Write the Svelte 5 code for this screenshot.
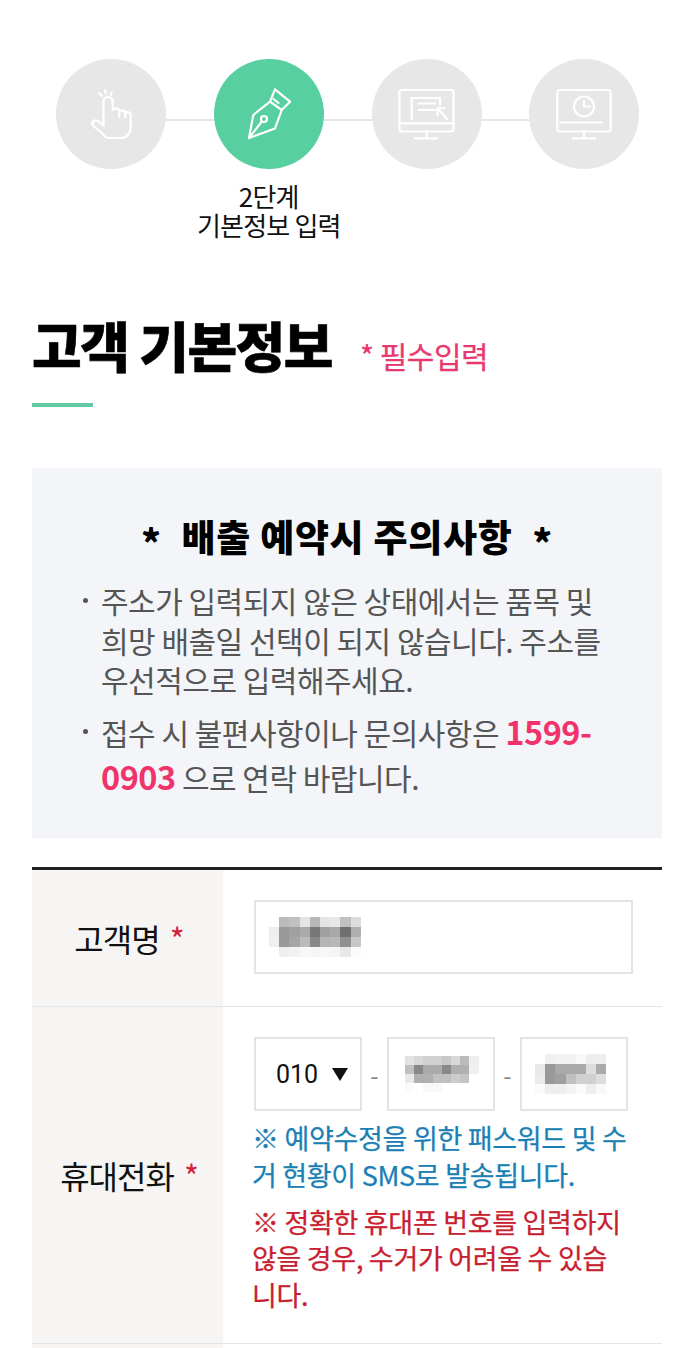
<script>
  const mosaics = {
    name: { w: 10.2, h: 10, cols: 9, cells: [
      '#fff','#bbb','#c0c0c0','#e4e4e4','#b8b8b8','#e4e4e4','#e8e8e8','#c0c0c0','#dcdcdc',
      '#eee','#999','#a0a0a0','#aaa','#777','#a0a0a0','#a8a8a8','#6f6f6f','#b0b0b0',
      '#f0f0f0','#999','#a5a5a5','#bbb','#888','#b5b5b5','#b8b8b8','#909090','#c8c8c8',
      '#fff','#f0f0f0','#f2f2f2','#f8f8f8','#f5f5f5','#f8f8f8','#f5f5f5','#e8e8e8','#fbfbfb'
    ] },
    mid: { w: 9.2, h: 9, cols: 8, cells: [
      '#e2e2e2','#d8d8d8','#d0d0d0','#d0d0d0','#c8c8c8','#d8d8d8','#bbb','#eee',
      '#c0c0c0','#888','#aaa','#aaa','#888','#b0b0b0','#b0b0b0','#f0f0f0',
      '#e8e8e8','#b0b0b0','#b0b0b0','#c0c0c0','#c0c0c0','#ccc','#c4c4c4','#fff',
      '#fbfbfb','#fff','#f8f8f8','#f8f8f8','#fff','#fff','#fff','#fff'
    ] },
    last: { w: 10.2, h: 10, cols: 7, cells: [
      '#fff','#f0f0f0','#f2f2f2','#f2f2f2','#f8f8f8','#eee','#eee',
      '#e8e8e8','#999','#aaa','#aaa','#aaa','#ddd','#aaa',
      '#ebebeb','#999','#a0a0a0','#c0c0c0','#d0d0d0','#d0d0d0','#ddd',
      '#fafafa','#eee','#eee','#f4f4f4','#fafafa','#eee','#f8f8f8'
    ] }
  };
</script>

{#snippet mosaic(m)}
  <div class="mosaic" style="grid-template-columns: repeat({m.cols}, {m.w}px); grid-auto-rows: {m.h}px">
    {#each m.cells as c}<i style="background: {c}"></i>{/each}
  </div>
{/snippet}

<div class="page">
  <div class="steps">
    <div class="step">
      <div class="circle">
        <svg viewBox="0 0 110 110">
          <path d="M47.5 66 V42.5 a4.6 4.6 0 0 1 9.2 0 V51 c2-2 6.5-2 6.5 1.5 c2-2 6-1.5 6 1.5 c2-1.5 5.5-1 5.5 2 V68 c0 6-4 11-9 11 H53 c-3 0-5-2-7-5 L37 66.500 c-2.500-3 1.500-6.500 5-4.500 l5.500 4.500" />
          <path d="M63.200 52.500 V58 M69.200 54 V58 M43.300 34.300 L45.700 37 M49 31 L49.700 34.300 M55.700 33.300 L54.700 36" />
        </svg>
      </div>
    </div>
    <div class="step active">
      <div class="circle">
        <svg viewBox="0 0 110 110">
          <path d="M35 79 L39.300 56 L56 42.700 L61 30.300 L76 42.700 L67.700 51 L61 69.500 Z" />
          <path d="M56 42.700 L67.700 51 M35 79 L47.800 62.500 M59.500 40 L64.500 44" />
          <circle cx="50" cy="60" r="3" />
        </svg>
      </div>
      <div class="step-label">2단계<br />기본정보 입력</div>
    </div>
    <div class="step">
      <div class="circle">
        <svg viewBox="0 0 110 110">
          <rect x="27.500" y="31" width="54" height="41.500" rx="2.500" />
          <path d="M27.500 64.300 H81.500 M54.700 72.500 V79.300 M43 79.300 H65.300" />
          <path d="M39.700 60 V39 H68 V46 M46.500 44.500 H63 M46.500 51 H63" />
          <path d="M65.500 49 L65.500 56 M65.500 49 L72.500 49 M66 49.500 L75 60" />
        </svg>
      </div>
    </div>
    <div class="step">
      <div class="circle">
        <svg viewBox="0 0 110 110">
          <rect x="28.300" y="31" width="53.400" height="41.500" rx="2.500" />
          <path d="M31 63.500 H73 M55 72.500 V79.300 M44 79.300 H66" />
          <circle cx="55" cy="47.500" r="10" />
          <path d="M55 41.500 V47.500 H61" />
        </svg>
      </div>
    </div>
  </div>

  <div class="title">
    <h2>고객 기본정보</h2>
    <span>* 필수입력</span>
  </div>
  <div class="title-bar"></div>

  <div class="notice">
    <h3><b>*</b>배출 예약시 주의사항<b>*</b></h3>
    <ul>
      <li>주소가 입력되지 않은 상태에서는 품목 및 희망 배출일 선택이 되지 않습니다. 주소를 우선적으로 입력해주세요.</li>
      <li class="tel">접수 시 불편사항이나 문의사항은 <strong>1599-0903</strong> 으로 연락 바랍니다.</li>
    </ul>
  </div>

  <div class="form">
    <div class="row row-name">
      <div class="label">고객명 <em>*</em></div>
      <div class="field">
        <div class="box box-name">{@render mosaic(mosaics.name)}</div>
      </div>
    </div>
    <div class="row row-phone">
      <div class="label">휴대전화 <em>*</em></div>
      <div class="field">
        <div class="phone">
          <div class="box select">010<span class="arrow"></span></div>
          <span class="dash">-</span>
          <div class="box part">{@render mosaic(mosaics.mid)}</div>
          <span class="dash">-</span>
          <div class="box part last">{@render mosaic(mosaics.last)}</div>
        </div>
        <p class="note blue">※ 예약수정을 위한 패스워드 및 수거 현황이 SMS로 발송됩니다.</p>
        <p class="note red">※ 정확한 휴대폰 번호를 입력하지 않을 경우, 수거가 어려울 수 있습니다.</p>
      </div>
    </div>
    <div class="row row-rest">
      <div class="label"></div>
      <div class="field"></div>
    </div>
  </div>
</div>

<style>
  :global(body) {
    background: #fff;
  }

  .page {
    width: 700px;
    height: 1348px;
    overflow: hidden;
    padding: 59px 38px 0 32px;
    box-sizing: border-box;
    font-family: 'Noto Sans CJK KR', 'Noto Sans', sans-serif;
    color: #111;
  }

  /* steps */
  .steps {
    display: flex;
    gap: 47.800px;
    padding-left: 24px;
    height: 209px;
    background: linear-gradient(#e6e6e6, #e6e6e6) no-repeat 40px 60px / 470px 2px;
  }

  .step {
    width: 110px;
    position: relative;
  }

  .circle {
    width: 110px;
    height: 110px;
    border-radius: 50%;
    background: #e7e7e7;
  }

  .active .circle {
    background: #58cfa0;
  }

  .circle svg {
    display: block;
    width: 110px;
    height: 110px;
    fill: none;
    stroke: #fff;
    stroke-width: 2.200;
    stroke-linejoin: round;
    stroke-linecap: round;
    filter: blur(0.3px);
  }

  .step-label {
    position: absolute;
    top: 122px;
    left: -45px;
    width: 200px;
    text-align: center;
    font-size: 26px;
    line-height: 29px;
    letter-spacing: -0.8px;
    color: #111;
  }

  /* title */
  .title {
    display: flex;
    align-items: center;
    gap: 28px;
    height: 60px;
    margin-top: 47px;
  }

  h2 {
    margin: 0;
    font-size: 54px;
    font-weight: 900;
    letter-spacing: -1.500px;
    line-height: 60px;
    color: #000;
    -webkit-text-stroke: 0.6px #000;
  }

  .title span {
    font-size: 30px;
    letter-spacing: -0.5px;
    color: #e8386f;
    -webkit-text-stroke: 0.25px #e8386f;
    padding-top: 20px;
  }

  .title-bar {
    width: 61px;
    height: 4px;
    margin-top: 28px;
    background: #62cba3;
  }

  /* notice */
  .notice {
    margin-top: 61px;
    height: 370px;
    box-sizing: border-box;
    padding-top: 44px;
    background: #f3f5f9;
  }

  h3 {
    margin: 0 0 21px;
    display: flex;
    justify-content: center;
    gap: 20px;
    font-size: 37px;
    line-height: 48px;
    font-weight: 900;
    letter-spacing: 0.7px;
    color: #000;
  }

  h3 b {
    font-weight: 900;
    transform: translateY(5px);
  }

  ul {
    margin: 0;
    padding: 0 51px 0 69px;
    list-style: none;
    font-size: 30px;
    line-height: 39.500px;
    letter-spacing: -0.5px;
    color: #555;
  }

  li {
    position: relative;
  }

  li::before {
    content: '';
    position: absolute;
    left: -18px;
    top: 17px;
    width: 5px;
    height: 5px;
    border-radius: 50%;
    background: #555;
  }

  li.tel {
    margin-top: 9px;
    line-height: 44px;
  }

  li.tel::before {
    top: 20px;
  }

  strong {
    font-size: 32.500px;
    font-weight: 700;
    color: #f0346b;
  }

  /* form */
  .form {
    margin-top: 29px;
    border-top: 3px solid #222;
  }

  .row {
    display: grid;
    grid-template-columns: 191px 1fr;
    border-bottom: 1px solid #e5e5e5;
  }

  .row-name {
    height: 136px;
  }

  .row-phone {
    height: 336px;
  }

  .row-rest {
    height: 40px;
    border: 0;
  }

  .label {
    display: flex;
    align-items: center;
    justify-content: center;
    gap: 10px;
    padding-left: 3px;
    background: #f6f5f4;
    font-size: 32px;
    letter-spacing: -1px;
    color: #111;
  }

  .label em {
    font-style: normal;
    color: #d9203a;
  }

  .field {
    padding: 30px 30px 0 31px;
  }

  .box {
    box-sizing: border-box;
    border: 2px solid #e4e4e4;
    display: flex;
    align-items: center;
  }

  .box-name {
    height: 74px;
    width: 379px;
    padding-left: 13px;
  }

  .phone {
    display: flex;
    align-items: center;
    height: 74px;
  }

  .select {
    width: 108px;
    height: 74px;
    padding-left: 20px;
    font-size: 25px;
    font-family: 'Roboto', sans-serif;
    color: #111;
  }

  .arrow {
    margin-left: 14px;
    border-left: 8px solid transparent;
    border-right: 8px solid transparent;
    border-top: 13px solid #111;
  }

  .part {
    width: 108px;
    height: 74px;
    padding-left: 16px;
  }

  .part.last {
    padding-left: 13px;
  }

  .dash {
    width: 25px;
    text-align: center;
    font-size: 24px;
    color: #888;
  }

  .mosaic {
    display: grid;
    filter: blur(0.6px);
  }

  .mosaic i {
    display: block;
  }

  .note {
    margin: 0 3px 0 -2px;
    font-size: 27px;
    line-height: 36.500px;
    letter-spacing: -0.3px;
    -webkit-text-stroke: 0.25px currentColor;
  }

  .blue {
    margin-top: 9px;
    color: #1a7fb5;
  }

  .red {
    margin-top: 10.500px;
    color: #c8202f;
  }
</style>
